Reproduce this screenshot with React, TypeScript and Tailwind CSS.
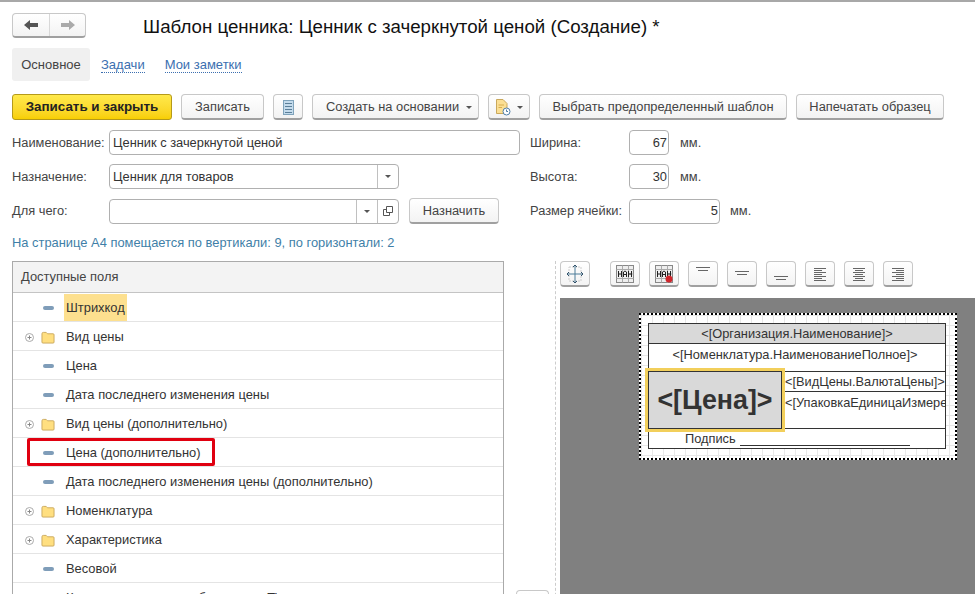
import type { ReactNode } from "react";

const font = "font-['Liberation_Sans',Arial,sans-serif]";
const btn =
  "flex items-center justify-center h-[26px] shrink-0 rounded-[4px] border border-[#c8c8c8] border-b-[#a0a0a0] border-b-2 bg-gradient-to-b from-white to-[#f3f3f3] pt-px text-[12.85px] text-[#444]";
const input = "h-[25px] flex items-center rounded-[4px] border border-[#b0b0b0] bg-white text-[12.85px] text-[#333]";

function Btn({ w, children, className = "" }: { w: string; children: ReactNode; className?: string }) {
  return <div className={`${btn} ${w} ${className}`}>{children}</div>;
}

function Caret() {
  return <span className="inline-block h-0 w-0 border-x-[3px] border-t-[3px] border-x-transparent border-t-[#555]" />;
}

function FieldIcon() {
  return <span className="block h-[4px] w-[11px] rounded-[2px] bg-[#7f9db9]" />;
}

function Folder() {
  return (
    <svg width="14" height="13" viewBox="0 0 15 14">
      <path d="M1 3 Q1 1.5 2.5 1.5 H5.5 L7 3 H13 Q14 3 14 4 V12 Q14 13 13 13 H2 Q1 13 1 12 Z" fill="#ffdf80" stroke="#c9a85c" />
    </svg>
  );
}

function Plus() {
  return (
    <svg width="9" height="9" viewBox="0 0 9 9">
      <circle cx="4.5" cy="4.5" r="4" fill="none" stroke="#aaa" />
      <path d="M2.5 4.5H6.5M4.5 2.5V6.5" stroke="#888" />
    </svg>
  );
}

function TreeRow({ text, folder, selected }: { text: string; folder?: boolean; selected?: boolean }) {
  return (
    <div className="flex h-[29px] shrink-0 items-center whitespace-nowrap border-b border-[#e4e4e4] pt-[2px] text-[12.9px] text-[#333]">
      <div className="ml-[11px] flex w-[11px] justify-center">{folder && <Plus />}</div>
      <div className="ml-[6px] flex w-[14px] justify-center">{folder ? <Folder /> : <FieldIcon />}</div>
      {selected ? (
        <span className="-mt-[2px] ml-[9px] flex h-[27px] items-center bg-[#fde08f] px-[2px] pt-[2px]">{text}</span>
      ) : (
        <span className="ml-[11px]">{text}</span>
      )}
    </div>
  );
}

function TableIcon({ del }: { del?: boolean }) {
  return (
    <svg width="18" height="18" viewBox="0 0 18 18">
      <rect x="0.5" y="0.5" width="17" height="17" fill="#eee" stroke="#888" />
      <path d="M.5 4.5H17.5M.5 13.5H17.5M6.5 .5V17.5M12.5 .5V17.5M12.5 9H17.5" stroke="#aaa" />
      <path d="M2.5 6V12M5.5 6V12M2.5 9H5.5M7.5 12V7L9 6L10.5 7V12M7.5 9.5H10.5M12.5 6V12M15.5 6V12M12.5 9H15.5" stroke="#222" fill="none" />
      {del && <circle cx="14" cy="14" r="3.5" fill="#d0262c" />}
    </svg>
  );
}

function AlignIcon({ pos }: { pos: "top" | "middle" | "bottom" }) {
  const y = pos === "top" ? 3.5 : pos === "middle" ? 7.5 : 12.5;
  return (
    <svg width="18" height="20" viewBox="0 0 18 20">
      <path d={`M2 ${y}H16M4 ${y + 3}H14`} stroke="#666" />
    </svg>
  );
}

function LinesIcon({ align }: { align: "left" | "center" | "right" }) {
  const rows = [12, 8, 12, 8, 12, 8, 12];
  return (
    <svg width="14" height="15" viewBox="0 0 14 15">
      {rows.map((w, i) => {
        const x = align === "left" ? 1 : align === "center" ? 7 - w / 2 : 13 - w;
        return <path key={i} d={`M${x} ${1.5 + i * 2}h${w}`} stroke="#666" />;
      })}
    </svg>
  );
}

const rows = [
  { text: "Штрихкод", selected: true },
  { text: "Вид цены", folder: true },
  { text: "Цена" },
  { text: "Дата последнего изменения цены" },
  { text: "Вид цены (дополнительно)", folder: true },
  { text: "Цена (дополнительно)" },
  { text: "Дата последнего изменения цены (дополнительно)" },
  { text: "Номенклатура", folder: true },
  { text: "Характеристика", folder: true },
  { text: "Весовой" },
  { text: "Количество шт. в коробке товара Ti" },
];

export default function App() {
  return (
    <div className={`${font} relative h-[594px] w-[975px] overflow-hidden border-t-2 border-[#a8a8a8] bg-white`}>
      <div className="ml-[12px] mt-[11px] flex h-[25px] items-center">
        <div className="flex h-[25px] w-[74px] shrink-0 rounded-[4px] border border-[#c8c8c8] border-b-2 border-b-[#a0a0a0] bg-gradient-to-b from-white to-[#f3f3f3]">
          <div className="flex w-[37px] items-center justify-center border-r border-[#d8d8d8]">
            <svg width="14" height="10" viewBox="0 0 14 10">
              <path d="M0 5L6 0V3H14V7H6V10Z" fill="#555" />
            </svg>
          </div>
          <div className="flex flex-1 items-center justify-center">
            <svg width="14" height="10" viewBox="0 0 14 10">
              <path d="M14 5L8 0V3H0V7H8V10Z" fill="#aaa" />
            </svg>
          </div>
        </div>
        <h1 className="ml-[57px] whitespace-nowrap pt-[3px] text-[18.7px] font-normal text-[#111]">Шаблон ценника: Ценник с зачеркнутой ценой (Создание) *</h1>
      </div>

      <div className="ml-[12px] mt-[10px] flex h-[33px] items-center text-[13px]">
        <div className="flex h-[33px] w-[78px] items-center justify-center rounded-[3px] bg-[#f0f0f0] text-[#444]">Основное</div>
        <span className="ml-[11px] border-b border-dotted border-[#3b6fb0] leading-[15px] text-[#3b6fb0]">Задачи</span>
        <span className="ml-[20px] border-b border-dotted border-[#3b6fb0] leading-[15px] text-[#3b6fb0]">Мои заметки</span>
      </div>

      <div className="ml-[12px] mt-[13px] flex gap-[9px]">
        <div className="flex h-[26px] w-[160px] items-center justify-center rounded-[3px] border border-[#b59a1a] bg-gradient-to-b from-[#ffe94a] to-[#f8cf00] pt-px text-[13.4px] font-bold text-[#222]">
          Записать и закрыть
        </div>
        <Btn w="w-[83px]">Записать</Btn>
        <Btn w="w-[30px]">
          <svg width="11" height="15" viewBox="0 0 11 15">
            <rect x="0.5" y="0.5" width="10" height="14" fill="#c4dbec" stroke="#7fa3bb" />
            <path d="M2 3.5H9M2 6.5H9M2 9.5H9M2 12.5H9" stroke="#5b7f99" />
          </svg>
        </Btn>
        <Btn w="w-[167px]" className="gap-[7px] pl-[7px]">
          Создать на основании
          <Caret />
        </Btn>
        <Btn w="w-[42px]" className="gap-[6px]">
          <svg width="16" height="17" viewBox="0 0 16 17">
            <path d="M1.5 .5H8L12 4.5V14.5H1.5Z" fill="#fbdf94" stroke="#c9a85c" />
            <path d="M3.5 6H9M3.5 8.5H7" stroke="#d9ae4c" />
            <circle cx="11.5" cy="12.5" r="3.5" fill="#fff" stroke="#4f7ea8" />
            <path d="M11.5 10.5V12.5H13" stroke="#4f7ea8" fill="none" />
          </svg>
          <Caret />
        </Btn>
        <Btn w="w-[248px]">Выбрать предопределенный шаблон</Btn>
        <Btn w="w-[148px]">Напечатать образец</Btn>
      </div>

      <div className="ml-[12px] mt-[10px] flex flex-col gap-[9px] text-[12.85px] text-[#444]">
        <div className="flex items-center">
          <span className="w-[97px]">Наименование:</span>
          <div className={`${input} w-[411px] pl-[3px]`}>Ценник с зачеркнутой ценой</div>
          <span className="ml-[10px] w-[99px]">Ширина:</span>
          <div className={`${input} w-[40px] justify-end pr-[1px]`}>67</div>
          <span className="ml-[11px]">мм.</span>
        </div>
        <div className="flex items-center">
          <span className="w-[97px]">Назначение:</span>
          <div className={`${input} w-[290px] pl-[3px]`}>
            <span className="flex-1">Ценник для товаров</span>
            <div className="flex h-full w-[21px] items-center justify-center border-l border-[#c0c0c0]">
              <Caret />
            </div>
          </div>
          <span className="ml-[131px] w-[99px]">Высота:</span>
          <div className={`${input} w-[40px] justify-end pr-[1px]`}>30</div>
          <span className="ml-[11px]">мм.</span>
        </div>
        <div className="flex items-center">
          <span className="w-[97px]">Для чего:</span>
          <div className={`${input} w-[290px]`}>
            <span className="flex-1" />
            <div className="flex h-full w-[21px] items-center justify-center border-l border-[#c0c0c0]">
              <Caret />
            </div>
            <div className="flex h-full w-[21px] items-center justify-center border-l border-[#c0c0c0]">
              <svg width="10" height="10" viewBox="0 0 10 10">
                <path d="M3.5 .5H9.5V6.5H3.5ZM3.5 3.5H.5V9.5H6.5V6.5" fill="none" stroke="#555" />
              </svg>
            </div>
          </div>
          <Btn w="w-[90px]" className="ml-[10px]">Назначить</Btn>
          <span className="ml-[31px] w-[99px]">Размер ячейки:</span>
          <div className={`${input} w-[91px] justify-end pr-[1px]`}>5</div>
          <span className="ml-[10px]">мм.</span>
        </div>
      </div>

      <div className="ml-[12px] mt-[12px] text-[12.9px] leading-[14px] text-[#3f7fa8]">На странице А4 помещается по вертикали: 9, по горизонтали: 2</div>

      <div className="mt-[11px] flex">
        <div className="relative ml-[12px] flex h-[340px] w-[492px] shrink-0 flex-col border border-[#aaa]">
          <div className="flex h-[31px] shrink-0 items-center border-b border-[#c4c4c4] bg-[#f3f3f3] pl-[8px] text-[12.9px] text-[#444]">Доступные поля</div>
          {rows.map((r) => (
            <TreeRow key={r.text} {...r} />
          ))}
          <div className="absolute left-[14px] top-[176px] h-[28px] w-[188px] rounded-[2px] border-[3px] border-[#e00010]" />
        </div>

        <div className="w-[51px] shrink-0 pl-[12px] pt-[329px]">
          <div className={`${btn} w-[33px]`} />
        </div>

        <div className="flex-1 border-l border-dashed border-[#ccc] pl-[4px]">
          <div className="flex h-[26px] gap-[9px]">
            <Btn w="w-[30px]" className="mr-[11px]">
              <svg width="18" height="20" viewBox="0 0 18 20">
                <rect x="3" y="3" width="12" height="14" fill="none" stroke="#ccc" strokeDasharray="2 1" />
                <path d="M9 1V19M1 10H17" stroke="#4d7c99" />
                <path d="M7 3L9 1L11 3M7 17L9 19L11 17M3 8L1 10L3 12M15 8L17 10L15 12" stroke="#34536b" fill="none" />
              </svg>
            </Btn>
            <Btn w="w-[30px]"><TableIcon /></Btn>
            <Btn w="w-[30px]"><TableIcon del /></Btn>
            <Btn w="w-[30px]"><AlignIcon pos="top" /></Btn>
            <Btn w="w-[30px]"><AlignIcon pos="middle" /></Btn>
            <Btn w="w-[30px]"><AlignIcon pos="bottom" /></Btn>
            <Btn w="w-[30px]"><LinesIcon align="left" /></Btn>
            <Btn w="w-[30px]"><LinesIcon align="center" /></Btn>
            <Btn w="w-[30px]"><LinesIcon align="right" /></Btn>
          </div>

          <div className="mt-[11px] h-[310px] bg-[#808080] pl-[79px] pt-[15px]">
            <div className="h-[147px] w-[318px] border-2 border-dotted border-black bg-white bg-[linear-gradient(#e8e8e8_1px,transparent_1px),linear-gradient(90deg,#e8e8e8_1px,transparent_1px)] bg-[size:11px_10px] pl-[7px] pt-[8px] text-[#333]">
              <div className="w-[298px] border border-[#333] bg-white text-[12.8px]">
                <div className="flex h-[20px] items-center justify-center border-b border-[#333] bg-[#d9d9d9]">&lt;[Организация.Наименование]&gt;</div>
                <div className="flex h-[28px] justify-center whitespace-nowrap border-b border-[#333] pt-[1px] pr-[4px]">&lt;[Номенклатура.НаименованиеПолное]&gt;</div>
                <div className="flex h-[57px] border-b border-[#333]">
                  <div className="z-10 -my-px -ml-px flex w-[134px] shrink-0 items-center justify-center border border-[#333] bg-[#d9d9d9] text-[26.8px] font-bold outline-[3px] outline-[#f2cf5b]">&lt;[Цена]&gt;</div>
                  <div className="min-w-0 flex-1 overflow-hidden whitespace-nowrap">
                    <div className="flex h-[20px] items-center border-b border-[#333] pl-[3px]">&lt;[ВидЦены.ВалютаЦены]&gt;</div>
                    <div className="pl-[3px] pt-[1px]">&lt;[УпаковкаЕдиницаИзмерения]&gt;</div>
                  </div>
                </div>
                <div className="flex h-[19px] items-center whitespace-nowrap pl-[36px]">
                  Подпись&nbsp;<span className="ml-[1px] mt-[3px] h-[11px] w-[170px] border-b border-[#333]" />
                </div>
              </div>
            </div>
          </div>
        </div>
      </div>
    </div>
  );
}
